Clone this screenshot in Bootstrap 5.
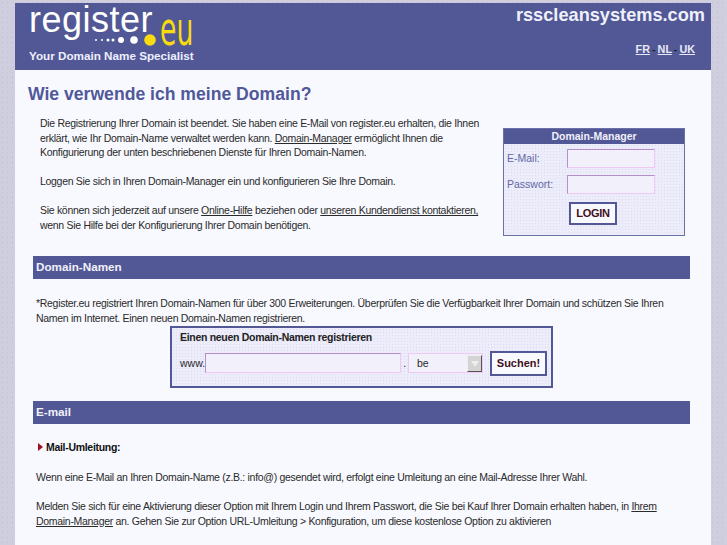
<!DOCTYPE html>
<html lang="de"><head><meta charset="utf-8"><title>register.eu</title>
<link href="https://cdn.jsdelivr.net/npm/bootstrap@5.3.0/dist/css/bootstrap.min.css" rel="stylesheet">
<style>
html,body{height:100%}
body{background:#cfcede radial-gradient(#c0bed4 .6px,transparent .7px) 0 0/5px 5px;font-family:"Liberation Sans",Arial,sans-serif;font-size:10.5px;line-height:14.5px;color:#2a2a2a;letter-spacing:-.3px;overflow:hidden}
a{color:#2a2a2a}
.shell{width:696px;margin:3px 0 0 15px;background:#f8f9ff;height:542px}
.top-bar{background:#525896;height:67px;color:#fff;letter-spacing:0}
.logo{width:190px;margin-left:14px;position:relative}
.logo-word{font-size:36px;line-height:36px;letter-spacing:.5px;color:#fff;position:absolute;left:0;top:-1px}
.logo-eu{font-family:"DejaVu Sans",sans-serif;font-size:46px;line-height:40px;color:#f8dc10;position:absolute;left:131px;top:6px;transform:scaleX(.58);transform-origin:0 0}
.logo-dots{position:absolute;left:60px;top:30px}
.logo-tag{position:absolute;left:0;top:46px;font-size:11.7px;line-height:14px;font-weight:700;color:#eef;white-space:nowrap}
.site-name{font-size:18.2px;line-height:22px;font-weight:700;color:#eef0fa;margin:1px 6px 0 0}
.lang{font-size:10.8px;font-weight:700;line-height:14px;color:#222;margin:16px 16px 0 0;word-spacing:-1px}
.lang a{color:#e6e8f6}
.page-title{font-size:17.6px;line-height:22px;font-weight:700;color:#50589a;margin:13px 0 0 13px;letter-spacing:0}
.intro{margin-top:11px;padding-left:25px;padding-right:26px;height:140px}
.intro-text{width:445px}
.intro-text p{margin:0 0 14.5px}
.login-box{width:182px;height:108px;margin-top:12px;background:#ececfa radial-gradient(#dcdcf0 .6px,transparent .7px) 0 0/3px 3px;border:1px solid #6a70a8;color:#6268a5;letter-spacing:0}
.login-head{background:#525896;color:#f0f0fa;font-weight:700;text-align:center;height:15px;line-height:15px}
.login-row{display:flex;align-items:center;height:19px;margin:5px 0 0 3px}
.login-row+.login-row{margin-top:7px}
.login-row label{width:60px}
.field{background:#f1f0fb;border:1px solid;border-color:#b58fc9 #f0c8f4 #f0c8f4 #b58fc9;height:19px;padding:0;border-radius:0;flex:none}
.login-field{width:88px}
.domain-field{width:196px;height:20px}
.login-btn{display:block;margin:8px 0 0 65px;width:48px;height:23px;background:#f8f9ff;border:2px solid #525896;border-radius:0;font-weight:700;font-size:11px;color:#401020;padding:0;letter-spacing:-.3px}
.sect-bar{background:#525896;color:#f0f0fa;font-size:11.7px;font-weight:700;height:23px;line-height:22px;margin:0 21px 0 18px;padding-left:3px;letter-spacing:0}
.sect-text{margin:0 30px 0 21px}
.sect-p{margin:17px 0 1px}
.search-box{width:383px;height:62px;margin:0 0 13px 155px;background:#ececfa radial-gradient(#dcdcf0 .6px,transparent .7px) 0 0/3px 3px;border:2px solid #525896;padding:2px 0 0 8px}
.search-title{font-weight:700;color:#222;margin-bottom:6px}
.search-select{width:75px;height:20px;flex:none;background:#f1f0fb;border:1px solid #f0c8f4;position:relative;padding-left:8px;line-height:18px;letter-spacing:0}
.search-arrow{position:absolute;right:0;top:1px;width:15px;height:17px;background:#d4d4d4;border:1px solid;border-color:#eee #555 #555 #eee;display:flex;align-items:center;justify-content:center}
.search-arrow::after{content:"";border-left:4px solid transparent;border-right:4px solid transparent;border-top:6px solid #eee}
.search-btn{width:57px;height:25px;flex:none;background:#f8f9ff;border:2px solid #525896;border-radius:0;font-weight:700;font-size:11px;color:#401020;padding:0;margin-left:7px;letter-spacing:0}
.www{width:25px;flex:none;letter-spacing:0}
.dot-sep{width:7px;flex:none;text-align:center}
.mail-head{font-weight:700;color:#111;margin:16px 0 15.5px 0;display:flex;align-items:center;gap:3px}
.tri{width:0;height:0;border-left:5px solid #a01020;border-top:4.5px solid transparent;border-bottom:4.5px solid transparent;margin-left:2px}
.wide-line{margin-bottom:14.5px}
</style></head><body>
<div class="shell">
<header class="top-bar d-flex justify-content-between">
<div class="logo"><span class="logo-word">register</span><span class="logo-eu">eu</span>
<svg class="logo-dots" width="72" height="14" viewBox="0 0 72 14"><circle cx="7" cy="7" r="1" fill="#fff"/><circle cx="13" cy="7" r="1" fill="#fff"/><circle cx="19" cy="7" r="1.5" fill="#fff"/><circle cx="24" cy="7" r="1.5" fill="#fff"/><circle cx="32" cy="7" r="3" fill="#fff"/><circle cx="45" cy="7" r="3.8" fill="#fff"/><circle cx="61" cy="7" r="5.8" fill="#f8dc10"/></svg>
<span class="logo-tag">Your Domain Name Specialist</span></div>
<div class="d-flex flex-column align-items-end"><div class="site-name">rsscleansystems.com</div>
<div class="lang"><a href="#">FR</a> - <a href="#">NL</a> - <a href="#">UK</a></div></div>
</header>
<h1 class="page-title">Wie verwende ich meine Domain?</h1>
<div class="intro d-flex justify-content-between">
<div class="intro-text">
<p>Die Registrierung Ihrer Domain ist beendet. Sie haben eine E-Mail von register.eu erhalten, die Ihnen<br>erklärt, wie Ihr Domain-Name verwaltet werden kann. <a href="#">Domain-Manager</a> ermöglicht Ihnen die<br>Konfigurierung der unten beschriebenen Dienste für Ihren Domain-Namen.</p>
<p>Loggen Sie sich in Ihren Domain-Manager ein und konfigurieren Sie Ihre Domain.</p>
<p>Sie können sich jederzeit auf unsere <a href="#">Online-Hilfe</a> beziehen oder <a href="#">unseren Kundendienst kontaktieren,</a><br>wenn Sie Hilfe bei der Konfigurierung Ihrer Domain benötigen.</p>
</div>
<form class="login-box">
<div class="login-head">Domain-Manager</div>
<div class="login-row"><label>E-Mail:</label><div class="field login-field"></div></div>
<div class="login-row"><label>Passwort:</label><div class="field login-field"></div></div>
<button type="button" class="login-btn">LOGIN</button>
</form>
</div>
<h2 class="sect-bar">Domain-Namen</h2>
<div class="sect-text">
<p class="sect-p">*Register.eu registriert Ihren Domain-Namen für über 300 Erweiterungen. Überprüfen Sie die Verfügbarkeit Ihrer Domain und schützen Sie Ihren<br>Namen im Internet. Einen neuen Domain-Namen registrieren.</p>
</div>
<div class="search-box">
<div class="search-title">Einen neuen Domain-Namen registrieren</div>
<div class="d-flex align-items-center"><span class="www">www.</span><div class="field domain-field"></div><span class="dot-sep">.</span><div class="search-select">be<span class="search-arrow"></span></div><button type="button" class="search-btn">Suchen!</button></div>
</div>
<h2 class="sect-bar">E-mail</h2>
<div class="sect-text">
<div class="mail-head"><span class="tri"></span>Mail-Umleitung:</div>
<p class="wide-line">Wenn eine E-Mail an Ihren Domain-Name (z.B.: info@) gesendet wird, erfolgt eine Umleitung an eine Mail-Adresse Ihrer Wahl.</p>
<p>Melden Sie sich für eine Aktivierung dieser Option mit Ihrem Login und Ihrem Passwort, die Sie bei Kauf Ihrer Domain erhalten haben, in <a href="#">Ihrem<br>Domain-Manager</a> an. Gehen Sie zur Option URL-Umleitung &gt; Konfiguration, um diese kostenlose Option zu aktivieren</p>
</div>
</div>
</body></html>
